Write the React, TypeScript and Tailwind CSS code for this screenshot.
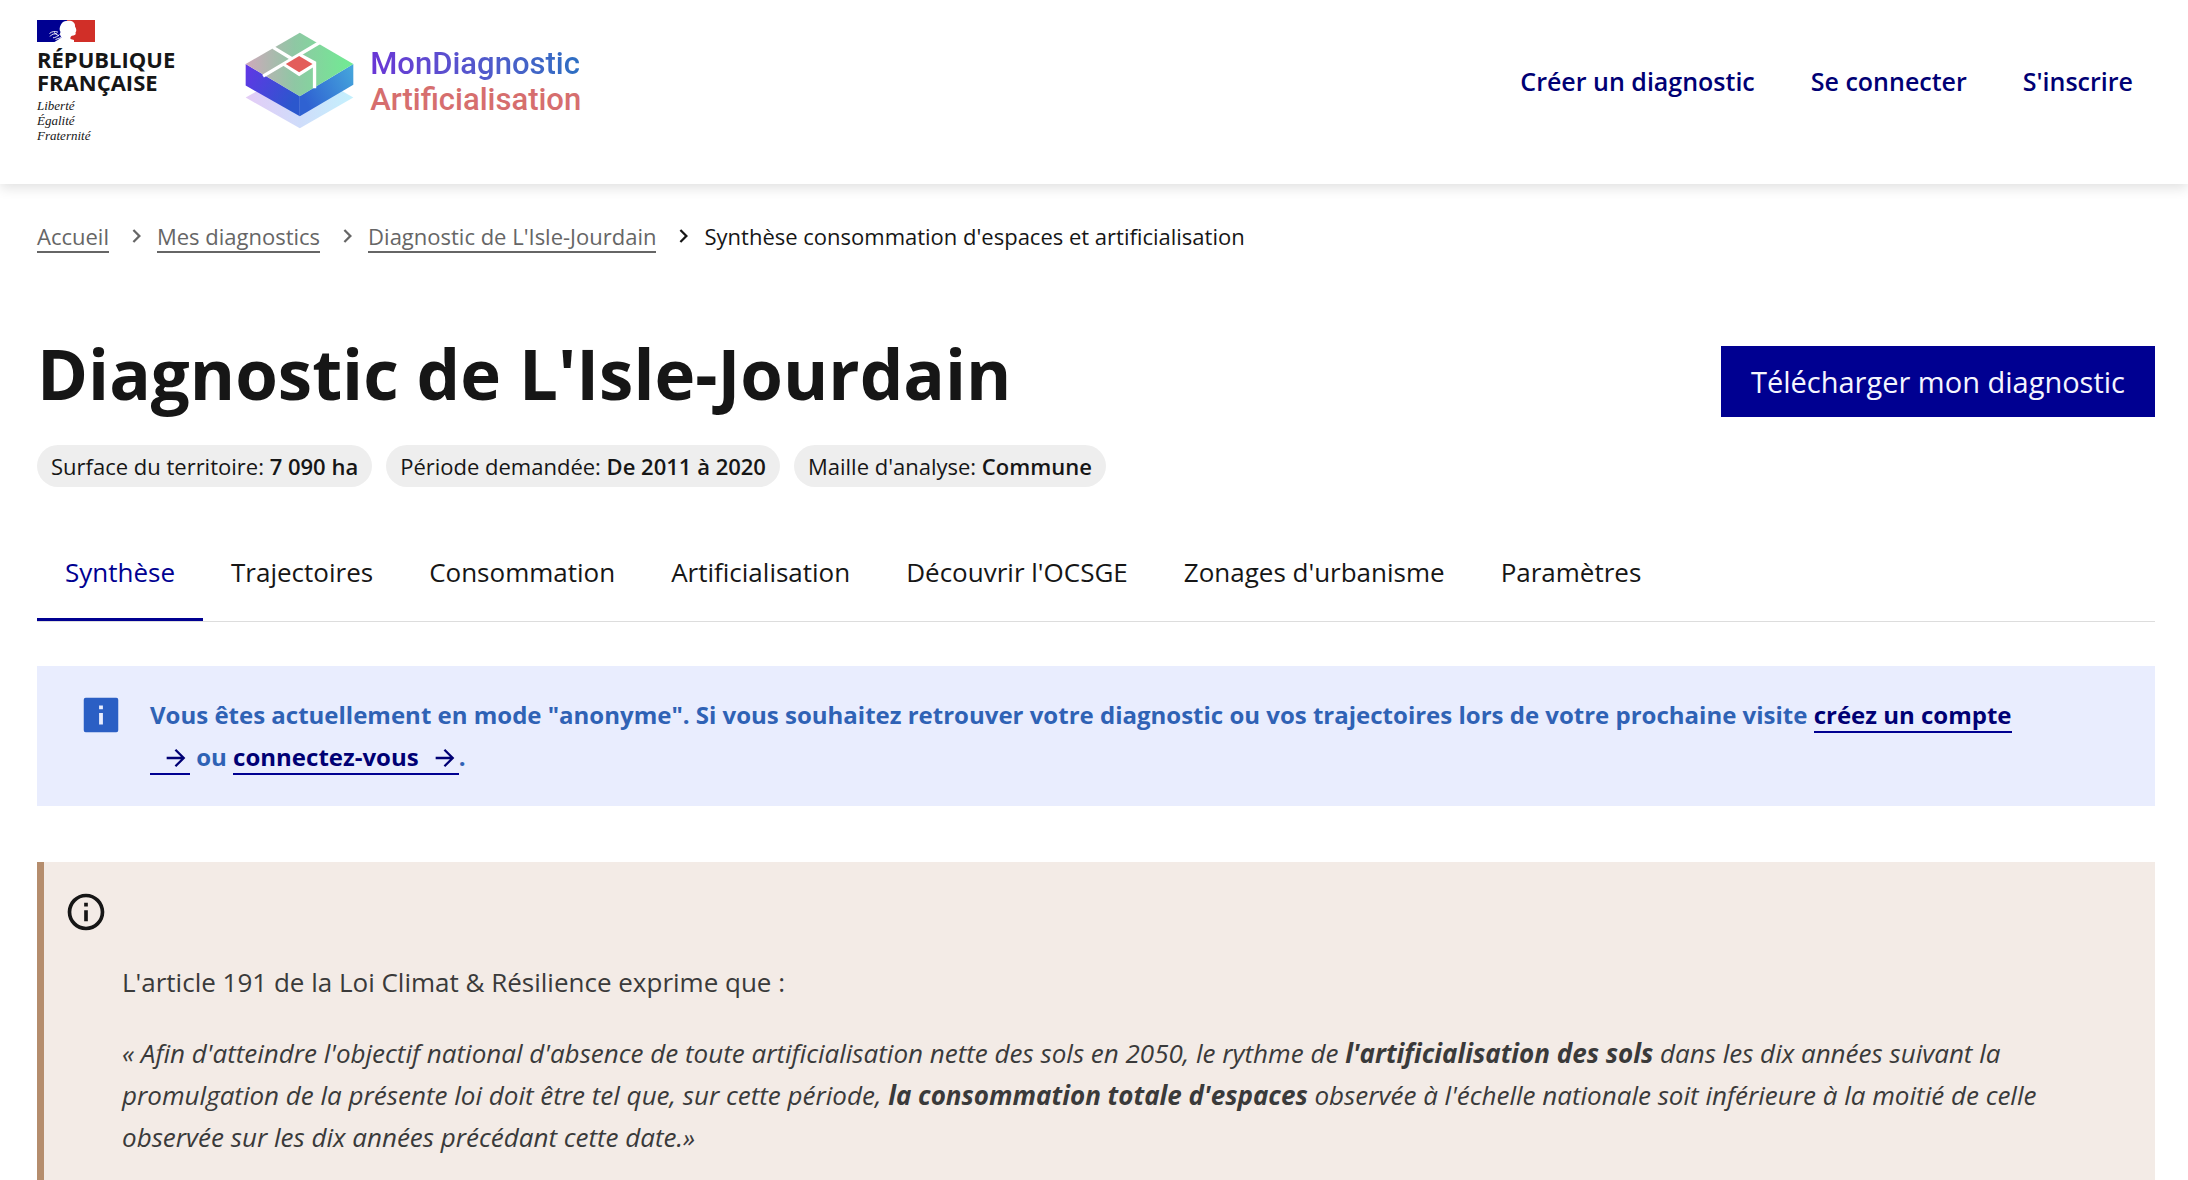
import React from 'react';
import clsx from 'clsx';

const navLinks = ["Créer un diagnostic", "Se connecter", "S'inscrire"];

const breadcrumb = ["Accueil", "Mes diagnostics", "Diagnostic de L'Isle-Jourdain"];

const tags = [
    { label: "Surface du territoire:", value: "7 090 ha" },
    { label: "Période demandée:", value: "De 2011 à 2020" },
    { label: "Maille d'analyse:", value: "Commune" },
];

const tabs = ["Synthèse", "Trajectoires", "Consommation", "Artificialisation", "Découvrir l'OCSGE", "Zonages d'urbanisme", "Paramètres"];

const RepubliqueLogo = () => (
    <div className="text-[#161616]">
        <svg viewBox="0 0 58 22" className="block w-[58px] h-[22px]" aria-hidden="true">
            <rect width="30" height="22" fill="#000091" />
            <rect x="30" width="28" height="22" fill="#d12f28" />
            <path d="M24 4.500C25.500 1 29.500 .3 33 .8C37 1.400 38.300 4 38 6.500C39.500 9 39.800 11 38.500 12.500C39 14 38.500 15.200 36.500 15.500C34 15.600 33.200 17 33.500 19L37 20V22H17.500C19.500 20.500 22 19.500 24.500 17.500C23 15.500 22.500 14 23.500 12C22 10 22.500 7 24 4.500Z" fill="#fff" />
            <path d="M12.500 13.500C15 11.300 18 11 21 12.200M13 16.500C14.500 14 17.500 13.500 20 14M16 17.800C18 17.800 20.500 16.500 22.500 14.500M17 12.500L22 16M18.500 19.500L24 17.500" fill="none" stroke="#fff" strokeWidth="0.9" />
        </svg>
        <p className="mt-[6px] text-[22px] leading-[23px] font-bold">
            RÉPUBLIQUE<br />FRANÇAISE
        </p>
        <p className="mt-1 text-[13px] leading-[15px] italic font-['Liberation_Serif',serif]">
            Liberté<br />Égalité<br />Fraternité
        </p>
    </div>
);

const DiagnosticLogo = () => (
    <svg viewBox="44 36 326 290" className="w-[109px] h-[97px]" aria-hidden="true">
        <defs>
            <linearGradient id="top" x1="0" y1="0.4" x2="1" y2="0.4">
                <stop offset="0" stopColor="#cfa9bb" />
                <stop offset="0.45" stopColor="#8fc7a4" />
                <stop offset="1" stopColor="#6fec92" />
            </linearGradient>
            <linearGradient id="left" x1="0" y1="0" x2="1" y2="0.5">
                <stop offset="0" stopColor="#6236e6" />
                <stop offset="1" stopColor="#2b57cd" />
            </linearGradient>
            <linearGradient id="right" x1="0" y1="0.5" x2="1" y2="0">
                <stop offset="0" stopColor="#2f62d2" />
                <stop offset="1" stopColor="#46a8dc" />
            </linearGradient>
            <linearGradient id="shadow" x1="0" y1="0" x2="1" y2="0">
                <stop offset="0" stopColor="#e4ccf6" />
                <stop offset="0.5" stopColor="#cfdcfa" />
                <stop offset="1" stopColor="#c4f1fd" />
            </linearGradient>
        </defs>
        <path d="M46 232L208 140L368 232L208 324Z" fill="url(#shadow)" />
        <path d="M46 132L208 228V288L46 196Z" fill="url(#left)" />
        <path d="M368 132L208 228V288L368 194Z" fill="url(#right)" />
        <path d="M208 38L368 132L208 228L46 132Z" fill="url(#top)" />
        <path d="M128 82L184 116M266 68L98 168M160 132L206 162L250 134M206 103L252 128V204" fill="none" stroke="#fff" strokeWidth="10" />
        <path d="M206 102L256 132L206 162L156 132Z" fill="#fff" />
        <path d="M206 108L246 132L206 156L166 132Z" fill="#e35d5b" />
    </svg>
);

const ArrowIcon = () => (
    <svg viewBox="0 0 24 24" className="inline-block w-7 h-7 ml-3 align-[-6px]" fill="currentColor" aria-hidden="true">
        <path d="m16.200 11-5.400-5.400 1.400-1.400L20 12l-7.800 7.800-1.400-1.400 5.400-5.400H4v-2h12.200Z" />
    </svg>
);

const Chevron = ({ className }: { className: string }) => (
    <svg viewBox="0 0 24 24" className={clsx("w-6 h-6 ml-4 mr-2", className)} fill="currentColor" aria-hidden="true">
        <path d="M12.800 12 7.600 6.800l1.600-1.600 6.800 6.800-6.800 6.800-1.600-1.600z" />
    </svg>
);

const App = () => {
    return (
        <div className="min-h-screen bg-white text-[#161616] font-['Open_Sans',sans-serif]">
            <header className="flex items-start justify-between h-46 px-[37px] pt-5 shadow-[0_4px_12px_rgba(0,0,0,0.12)]">
                <div className="flex items-start gap-[70px]">
                    <RepubliqueLogo />
                    <a href="#" className="flex items-center gap-4 mt-3">
                        <DiagnosticLogo />
                        <span className="pt-0.5 text-[31px] leading-9 font-medium font-['Roboto',sans-serif]">
                            <span className="block bg-linear-to-r from-[#6a35d6] to-[#2a6fc2] bg-clip-text text-transparent">MonDiagnostic</span>
                            <span className="block text-[#d66e6e]">Artificialisation</span>
                        </span>
                    </a>
                </div>
                <nav className="flex gap-14 pt-[43px] pr-[18px]">
                    {navLinks.map((link) => (
                        <a key={link} href="#" className="text-[25px] leading-9 font-semibold text-[#000074]">{link}</a>
                    ))}
                </nav>
            </header>

            <main className="pl-[37px] pr-[33px]">
                <nav aria-label="Fil d'Ariane" className="pt-9">
                    <ol className="flex items-center text-[22px] leading-8">
                        {breadcrumb.map((item, index) => (
                            <li key={item} className="flex items-center">
                                <span><a href="#" className="border-b-2 border-[#666666] text-[#666666]">{item}</a></span>
                                <Chevron className={index === 2 ? "text-[#161616]" : "text-[#666666]"} />
                            </li>
                        ))}
                        <li aria-current="page">Synthèse consommation d'espaces et artificialisation</li>
                    </ol>
                </nav>

                <div className="flex items-start justify-between mt-[82px]">
                    <h1 className="text-[69px] leading-[78px] font-bold">Diagnostic de L'Isle-Jourdain</h1>
                    <button className="mt-3 px-[30px] h-[71px] text-[29px] bg-[#000091] text-[#f5f5fe]">Télécharger mon diagnostic</button>
                </div>

                <ul className="flex gap-[14px] mt-7">
                    {tags.map((tag) => (
                        <li key={tag.label} className="rounded-full bg-[#eeeeee] px-[14px] text-[22px] leading-[42px]">
                            {tag.label} <strong className="font-semibold">{tag.value}</strong>
                        </li>
                    ))}
                </ul>

                <div role="tablist" className="flex mt-[43px] border-b border-[#dddddd]">
                    {tabs.map((tab, index) => (
                        <button
                            key={tab}
                            role="tab"
                            aria-selected={index === 0}
                            className={clsx(
                                "h-[91px] px-7 pb-1 text-[26px] border-b-[3px]",
                                index === 0 ? "text-[#000091] border-[#000091]" : "border-transparent"
                            )}
                        >
                            {tab}
                        </button>
                    ))}
                </div>

                <div className="flex items-start mt-11 pl-[41px] pr-32 py-7 bg-[#e9edfe]">
                    <svg viewBox="0 0 24 24" className="shrink-0 w-[46px] h-[46px] -mt-0.5" fill="#2b5fc4" aria-hidden="true">
                        <path fillRule="evenodd" d="M4 3h16a1 1 0 0 1 1 1v16a1 1 0 0 1-1 1H4a1 1 0 0 1-1-1V4a1 1 0 0 1 1-1Zm7 4v2h2V7h-2Zm0 4v6h2v-6h-2Z" />
                    </svg>
                    <p className="ml-[26px] text-[24px] leading-[42px] font-bold text-[#2f62b5]">
                        Vous êtes actuellement en mode "anonyme". Si vous souhaitez retrouver votre diagnostic ou vos trajectoires lors de votre prochaine visite{" "}
                        <a href="#" className="border-b-2 border-[#000091] text-[#000074]">créez un compte<ArrowIcon /></a> ou{" "}
                        <a href="#" className="border-b-2 border-[#000091] text-[#000074]">connectez-vous<ArrowIcon /></a>.
                    </p>
                </div>

                <section className="mt-14 min-h-[340px] border-l-[7px] border-[#b58d6d] bg-[#f3ebe6] pl-[78px] pr-20 pt-[99px] pb-10 relative text-[26px] leading-[42px] text-[#3a3a3a]">
                    <svg viewBox="0 0 24 24" className="absolute left-5 top-7 w-11 h-11" fill="#161616" aria-hidden="true">
                        <path fillRule="evenodd" d="M12 22C6.477 22 2 17.523 2 12S6.477 2 12 2s10 4.477 10 10-4.477 10-10 10Zm0-2a8 8 0 1 0 0-16 8 8 0 0 0 0 16ZM11 7h2v2h-2V7Zm0 4h2v6h-2v-6Z" />
                    </svg>
                    <p>L'article 191 de la Loi Climat &amp; Résilience exprime que :</p>
                    <p className="mt-[29px] italic">
                        « Afin d'atteindre l'objectif national d'absence de toute artificialisation nette des sols en 2050, le rythme de <strong>l'artificialisation des sols</strong> dans les dix années suivant la promulgation de la présente loi doit être tel que, sur cette période, <strong>la consommation totale d'espaces</strong> observée à l'échelle nationale soit inférieure à la moitié de celle observée sur les dix années précédant cette date.»
                    </p>
                </section>
            </main>
        </div>
    );
}

export default App;
